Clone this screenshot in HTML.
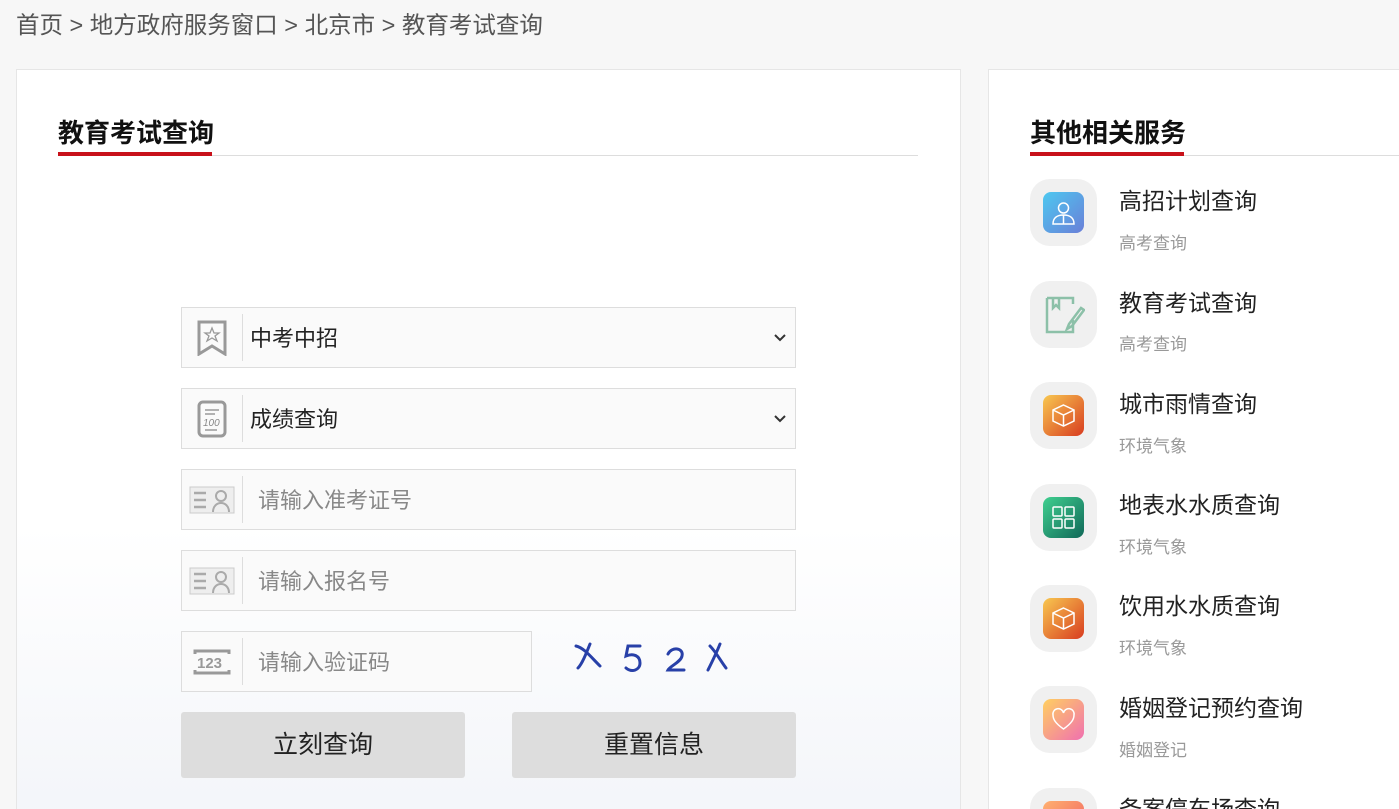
<!DOCTYPE html><html><head><meta charset="utf-8"><style>
html,body{margin:0;width:1399px;height:809px;overflow:hidden}
body{background:#f7f7f7;font-family:"Liberation Sans","Noto Sans CJK SC",sans-serif;position:relative}
.a{position:absolute}
.bc{left:16px;top:9px;font-size:23.5px;color:#555;line-height:32px;white-space:nowrap}
.p{background:#fff;border:1px solid #e6e6e6}
.row{position:absolute;left:181px;width:613px;height:59px;border:1px solid #ddd;background:#fafafa}
.ic{position:absolute;left:0;top:6px;width:60px;height:47px;border-right:1px solid #ddd;display:flex;align-items:center;justify-content:center}
.tx{position:absolute;left:68px;top:1px;line-height:59px;font-size:22px;color:#222}
.ph{left:76px;color:#888}
.btn{position:absolute;top:712px;width:284px;height:66px;background:#ddd;border-radius:3px;font-size:25px;text-align:center;line-height:66px;color:#222}
.it{position:absolute;left:1030px;width:67px;height:67px;background:#f0f0f0;border-radius:20px}
.ib{position:absolute;left:13px;top:13px;width:41px;height:41px;border-radius:8px}
.ib svg{position:absolute;left:8px;top:8px}
.t1{position:absolute;left:1119px;font-size:23px;color:#222}
.t2{position:absolute;left:1119px;font-size:17px;color:#999}
.chev{position:absolute;right:8px;top:22px}
</style></head><body>
<div class="a bc">首页 &gt; 地方政府服务窗口 &gt; 北京市 &gt; 教育考试查询</div>
<div class="a p" style="left:16px;top:69px;width:943px;height:760px;background:linear-gradient(#fff 60%,#f3f5f9)"></div>
<div class="a p" style="left:988px;top:69px;width:430px;height:760px"></div>
<div class="a" style="left:58px;top:113px;font-size:26px;font-weight:bold;color:#111">教育考试查询</div>
<div class="a" style="left:58px;top:155px;width:860px;height:1px;background:#ddd"></div>
<div class="a" style="left:58px;top:152px;width:154px;height:4px;background:#c8111a"></div>
<div class="a" style="left:1030px;top:113px;font-size:26px;font-weight:bold;color:#111">其他相关服务</div>
<div class="a" style="left:1030px;top:155px;width:369px;height:1px;background:#ddd"></div>
<div class="a" style="left:1030px;top:152px;width:154px;height:4px;background:#c8111a"></div>

<div class="row" style="top:307px"><div class="ic"><svg width="30" height="36" viewBox="0 0 30 36"><path d="M2 2h26v32l-13-8-13 8z" fill="none" stroke="#999" stroke-width="3"/><path d="M15 8l2 5h5l-4 3 2 5-5-3-5 3 2-5-4-3h5z" fill="none" stroke="#999" stroke-width="1.3"/></svg></div><div class="tx">中考中招</div><svg class="chev" width="14" height="14"><path d="M2 5l5 5 5-5" fill="none" stroke="#333" stroke-width="2"/></svg></div>
<div class="row" style="top:388px"><div class="ic"><svg width="30" height="38" viewBox="0 0 30 38"><rect x="2" y="2" width="26" height="34" rx="4" fill="none" stroke="#999" stroke-width="3"/><path d="M8 10h14M8 14h10M8 30h12" stroke="#999" stroke-width="1.5"/><text x="6" y="26" font-size="10" font-style="italic" fill="#888" font-family="Liberation Sans">100</text></svg></div><div class="tx">成绩查询</div><svg class="chev" width="14" height="14"><path d="M2 5l5 5 5-5" fill="none" stroke="#333" stroke-width="2"/></svg></div>
<div class="row" style="top:469px"><div class="ic"><svg width="46" height="28" viewBox="0 0 46 28"><rect x="1" y="1" width="44" height="26" fill="#eee" stroke="#ccc"/><path d="M5 7h12M5 14h12M5 21h12" stroke="#aaa" stroke-width="2.5"/><circle cx="32" cy="10" r="5" fill="none" stroke="#aaa" stroke-width="2"/><path d="M24 26c0-6 4-9 8-9s8 3 8 9" fill="none" stroke="#aaa" stroke-width="2"/></svg></div><div class="tx ph">请输入准考证号</div></div>
<div class="row" style="top:550px"><div class="ic"><svg width="46" height="28" viewBox="0 0 46 28"><rect x="1" y="1" width="44" height="26" fill="#eee" stroke="#ccc"/><path d="M5 7h12M5 14h12M5 21h12" stroke="#aaa" stroke-width="2.5"/><circle cx="32" cy="10" r="5" fill="none" stroke="#aaa" stroke-width="2"/><path d="M24 26c0-6 4-9 8-9s8 3 8 9" fill="none" stroke="#aaa" stroke-width="2"/></svg></div><div class="tx ph">请输入报名号</div></div>
<div class="row" style="top:631px;width:349px"><div class="ic"><svg width="38" height="28" viewBox="0 0 38 28"><path d="M2 6V3h34v3M2 22v3h34v-3" fill="none" stroke="#999" stroke-width="3"/><text x="4" y="20" font-size="15" font-weight="bold" fill="#999" font-family="Liberation Sans">123</text></svg></div><div class="tx ph">请输入验证码</div></div>
<svg class="a" style="left:570px;top:636px" width="170" height="44" viewBox="0 0 170 44"><g fill="none" stroke="#2840a8" stroke-width="3" stroke-linecap="round"><path d="M6 10c8 2 14 10 24 20M20 8c-4 10-8 20-12 24"/><path d="M70 10h-12l-2 10c8-3 14 0 14 7s-8 10-14 5"/><path d="M98 18c4-8 16-6 14 2-1 6-12 10-14 14h16"/><path d="M140 10c6 6 10 14 16 22M150 8c-4 10-8 18-12 26"/></g></svg>
<div class="btn" style="left:181px">立刻查询</div>
<div class="btn" style="left:512px">重置信息</div>

<div class="it" style="top:179px"><div class="ib" style="background:linear-gradient(135deg,#4dc8f0,#6a7fd8)"><svg width="25" height="25" viewBox="0 0 25 25" fill="none" stroke="#fff" stroke-width="1.5"><circle cx="12.5" cy="8" r="5"/><path d="M2 24c0-6 4-9 10.5-9S23 18 23 24zM12.5 15v9"/></svg></div></div>
<div class="t1" style="top:182px">高招计划查询</div><div class="t2" style="top:229px">高考查询</div>
<div class="it" style="top:281px"><svg class="a" style="left:13px;top:13px" width="42" height="42" viewBox="0 0 42 42"><path d="M4 4h26v6M4 4v34h26V26M10 4v10l3-3 3 3V4" fill="none" stroke="#8cc0a8" stroke-width="2.5"/><path d="M38 14l-12 16-2 5 5-3 12-16z" fill="none" stroke="#8cc0a8" stroke-width="2.5"/></svg></div>
<div class="t1" style="top:284px">教育考试查询</div><div class="t2" style="top:330px">高考查询</div>
<div class="it" style="top:382px"><div class="ib" style="background:linear-gradient(135deg,#f8c850,#d83c20)"><svg width="25" height="25" viewBox="0 0 25 25" fill="none" stroke="#fff" stroke-width="1.5"><path d="M12.5 2L23 7v11l-10.5 5L2 18V7zM2 7l10.5 5L23 7M12.5 12v11"/></svg></div></div>
<div class="t1" style="top:385px">城市雨情查询</div><div class="t2" style="top:432px">环境气象</div>
<div class="it" style="top:484px"><div class="ib" style="background:linear-gradient(135deg,#40d090,#106858)"><svg width="25" height="25" viewBox="0 0 25 25" fill="none" stroke="#fff" stroke-width="1.5"><rect x="2" y="2" width="9" height="9" rx="1"/><rect x="14" y="2" width="9" height="9" rx="1"/><rect x="2" y="14" width="9" height="9" rx="1"/><rect x="14" y="14" width="9" height="9" rx="1"/></svg></div></div>
<div class="t1" style="top:486px">地表水水质查询</div><div class="t2" style="top:533px">环境气象</div>
<div class="it" style="top:585px"><div class="ib" style="background:linear-gradient(135deg,#f8c850,#d83c20)"><svg width="25" height="25" viewBox="0 0 25 25" fill="none" stroke="#fff" stroke-width="1.5"><path d="M12.5 2L23 7v11l-10.5 5L2 18V7zM2 7l10.5 5L23 7M12.5 12v11"/></svg></div></div>
<div class="t1" style="top:587px">饮用水水质查询</div><div class="t2" style="top:634px">环境气象</div>
<div class="it" style="top:686px"><div class="ib" style="background:linear-gradient(135deg,#ffd060,#f070b0)"><svg width="25" height="25" viewBox="0 0 25 25" fill="none" stroke="#fff" stroke-width="1.5"><path d="M12.5 22C4 16 2 12 2 8a5 5 0 0 1 10.5-2A5 5 0 0 1 23 8c0 4-2 8-10.5 14z"/></svg></div></div>
<div class="t1" style="top:689px">婚姻登记预约查询</div><div class="t2" style="top:736px">婚姻登记</div>
<div class="it" style="top:788px"><div class="ib" style="background:linear-gradient(135deg,#ffb070,#f06060)"></div></div>
<div class="t1" style="top:790px">备案停车场查询</div>
</body></html>
